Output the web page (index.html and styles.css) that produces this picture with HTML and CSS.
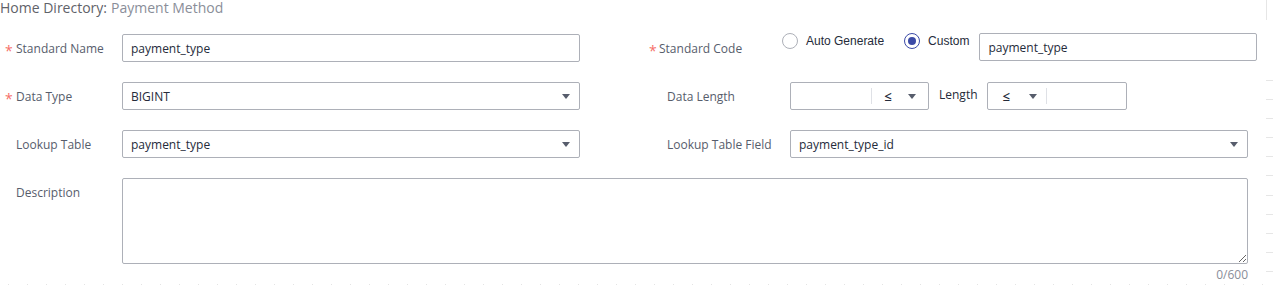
FILE: index.html
```html
<!DOCTYPE html>
<html lang="en">
<head>
<meta charset="utf-8">
<title>Payment Method</title>
<link rel="stylesheet" href="styles.css">
</head>
<body>
<div class="page">
  <div class="main">
    <div class="crumb"><span class="crumb-key">Home Directory:</span><span class="crumb-val">Payment Method</span></div>

    <div class="form">
      <div class="row row-first">
        <div class="field field-left">
          <div class="label"><span class="star">*</span>Standard Name</div>
          <div class="input"><span class="value">payment_type</span></div>
        </div>
        <div class="field field-code">
          <div class="label label-code"><span class="star">*</span>Standard Code</div>
          <div class="radios">
            <div class="radio"><span class="circle"></span><span class="radio-text">Auto Generate</span></div>
            <div class="radio checked"><span class="circle"></span><span class="radio-text">Custom</span></div>
          </div>
          <div class="input input-code"><span class="value">payment_type</span></div>
        </div>
      </div>

      <div class="row">
        <div class="field field-left">
          <div class="label"><span class="star">*</span>Data Type</div>
          <div class="input select"><span class="value">BIGINT</span><span class="caret"></span></div>
        </div>
        <div class="field field-right">
          <div class="label label-right">Data Length</div>
          <div class="length-group">
            <div class="combo combo-a">
              <div class="combo-input"></div>
              <div class="combo-sep"></div>
              <div class="combo-op"><span class="le">≤</span><span class="caret"></span></div>
            </div>
            <div class="length-text">Length</div>
            <div class="combo combo-b">
              <div class="combo-op"><span class="le">≤</span><span class="caret"></span></div>
              <div class="combo-sep"></div>
              <div class="combo-input"></div>
            </div>
          </div>
        </div>
      </div>

      <div class="row">
        <div class="field field-left">
          <div class="label"><span class="star"></span>Lookup Table</div>
          <div class="input select"><span class="value">payment_type</span><span class="caret"></span></div>
        </div>
        <div class="field field-right">
          <div class="label label-right">Lookup Table Field</div>
          <div class="input select"><span class="value">payment_type_id</span><span class="caret"></span></div>
        </div>
      </div>

      <div class="row row-desc">
        <div class="field field-desc">
          <div class="label"><span class="star"></span>Description</div>
          <div class="desc-box">
            <textarea class="textarea"></textarea>
            <div class="counter">0/600</div>
          </div>
        </div>
      </div>
    </div>
    <div class="dots"></div>
  </div>
  <div class="ruler"></div>
</div>
</body>
</html>
```

FILE: styles.css
```css
* { box-sizing: border-box; }

html, body {
  margin: 0;
  padding: 0;
  background: #ffffff;
}

body {
  font-family: "Open Sans", "Noto Sans", sans-serif;
  font-size: 12px;
  color: #575d6c;
  width: 1273px;
  height: 286px;
  overflow: hidden;
}

.page {
  display: flex;
  width: 1273px;
  height: 286px;
}

.main {
  width: 1266px;
  display: flex;
  flex-direction: column;
}

.ruler {
  width: 7px;
  height: 286px;
  background:
    linear-gradient(#e6e6e6, #e6e6e6) 0 0 / 1px 20px no-repeat,
    repeating-linear-gradient(to bottom, #e6e6e6 0 1px, transparent 1px 19.1px) 0 80px / 7px 206px no-repeat;
}

.crumb {
  height: 15px;
  line-height: 15px;
  font-size: 14px;
  white-space: nowrap;
}

.crumb-key { color: #5f6269; margin-right: 4px; }
.crumb-val { color: #8a8e99; }

.form {
  margin-top: 19px;
  display: flex;
  flex-direction: column;
  gap: 20px;
}

.row {
  display: flex;
  height: 28px;
}

.field {
  display: flex;
  align-items: center;
}

.field-left {
  width: 580px;
}

.label {
  width: 122px;
  padding-left: 5px;
  padding-top: 2px;
  line-height: 26px;
  white-space: nowrap;
  color: #575d6c;
  display: flex;
  align-items: center;
  flex-shrink: 0;
}

.star {
  display: inline-block;
  width: 11px;
  color: #f66f6a;
  font-size: 14px;
  line-height: 14px;
  padding-top: 3px;
}

.input {
  height: 28px;
  border: 1px solid #adb0b8;
  border-radius: 2px;
  flex: 1;
  display: flex;
  align-items: center;
  padding: 0 8px;
  color: #252b3a;
  background: #fff;
}

.value { flex: 1; white-space: nowrap; }

.caret {
  width: 0;
  height: 0;
  border-left: 4px solid transparent;
  border-right: 4px solid transparent;
  border-top: 5px solid #575d6c;
  margin-right: 1px;
  flex-shrink: 0;
}

/* standard code */
.field-code {
  margin-left: 64px;
  width: 614px;
  align-items: flex-start;
  margin-top: -1px;
}

.label-code {
  width: 138px;
  padding-left: 5px;
  padding-top: 3px;
}

.label-code .star { width: 10px; }

.radios {
  display: flex;
  height: 16px;
  margin-right: 10px;
  flex-shrink: 0;
  white-space: nowrap;
}

.radio {
  display: flex;
  align-items: center;
  gap: 8px;
  font-family: "Liberation Sans", Arial, sans-serif;
  color: #252b3a;
  height: 16px;
  white-space: nowrap;
  flex-shrink: 0;
}

.radio + .radio { margin-left: 20px; }

.circle {
  width: 16px;
  height: 16px;
  border-radius: 50%;
  border: 1px solid #adb0b8;
  display: flex;
  align-items: center;
  justify-content: center;
  flex-shrink: 0;
}

.radio.checked .circle { border-color: #3b4aa6; }

.radio.checked .circle::after {
  content: "";
  width: 8px;
  height: 8px;
  border-radius: 50%;
  background: #3b4aa6;
}

.radio-text { line-height: 16px; margin-top: -1px; }

.input-code { flex: 0 0 278px; }

/* right column */
.field-right {
  margin-left: 87px;
  width: 581px;
}

.label-right {
  width: 123px;
  padding-left: 0;
}

.length-group {
  display: flex;
  align-items: center;
}

.combo {
  height: 28px;
  border: 1px solid #adb0b8;
  border-radius: 2px;
  display: flex;
  align-items: center;
}

.combo-a { width: 139px; }
.combo-b { width: 140px; }

.combo-a .combo-input { width: 81px; }
.combo-b .combo-input { flex: 1; }

.combo-sep {
  width: 1px;
  height: 16px;
  background: #dfe1e6;
}

.combo-op {
  display: flex;
  align-items: center;
  color: #252b3a;
}

.combo-a .combo-op { padding-left: 12px; width: 56px; }
.combo-a .combo-op .caret { margin-left: 16px; }

.combo-b .combo-op { padding-left: 15px; width: 58px; }
.combo-b .combo-op .caret { margin-left: 19px; }

.le { font-size: 13px; line-height: 16px; font-weight: 600; }

.length-text {
  color: #252b3a;
  margin: -3px 9px 0 10px;
}

/* description */
.row-desc { height: auto; }

.field-desc {
  width: 1248px;
  align-items: flex-start;
}

.desc-box {
  flex: 1;
  display: flex;
  flex-direction: column;
}

.textarea {
  display: block;
  width: 100%;
  height: 86px;
  border: 1px solid #adb0b8;
  border-radius: 2px;
  resize: vertical;
  font-family: inherit;
  font-size: 12px;
  padding: 4px 8px;
  margin: 0;
  outline: none;
}

.counter {
  text-align: right;
  color: #8a8e99;
  line-height: 14px;
  margin-top: 4px;
}

.dots {
  margin-top: 2px;
  height: 1px;
  background: repeating-linear-gradient(to right, transparent 0 8px, #e4e4e4 8px 9px, transparent 9px 19px);
}
```
